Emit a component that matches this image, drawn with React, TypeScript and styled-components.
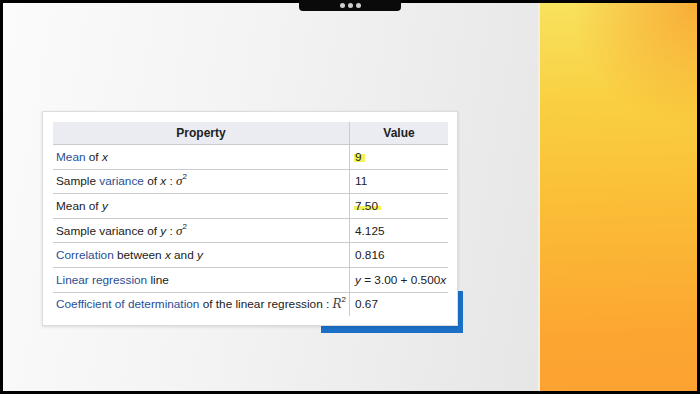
import React from 'react';
import styled, {createGlobalStyle} from 'styled-components';

const GlobalStyle = createGlobalStyle`
  html, body {
    margin: 0;
    padding: 0;
    background: #000;
  }
  body {
    font-family: "Liberation Sans", Arial, sans-serif;
  }
`;

const Frame = styled.div`
  position: relative;
  width: 700px;
  height: 394px;
  box-sizing: border-box;
  padding: 3px;
  background: #000;
`;

const Screen = styled.div`
  display: flex;
  height: 100%;
`;

const Stage = styled.div`
  flex: 1;
  isolation: isolate;
  padding: 108px 0 0 39px;
  background: linear-gradient(100deg, #fbfbfb 0%, #f3f3f3 45%, #e6e6e6 100%);
  border-right: 2px solid #f3efe4;
`;

const SidePanel = styled.div`
  width: 157px;
  background:
    radial-gradient(circle at 100% 0%, rgba(248, 150, 40, 0.7) 0%, rgba(248, 150, 40, 0) 30%),
    linear-gradient(178deg, #f8e25e 0%, #f9d042 25%, #fbbb36 55%, #fca631 85%, #fca231 100%);
`;

const Notch = styled.div`
  position: absolute;
  top: 0;
  left: 299px;
  width: 102px;
  height: 11px;
  background: #0a0a0a;
  border-radius: 0 0 4px 4px;
  display: flex;
  justify-content: center;
  align-items: center;
  gap: 3px;
  padding-bottom: 1px;
  box-sizing: border-box;
`;

const Dot = styled.span`
  width: 5px;
  height: 5px;
  border-radius: 50%;
  background: #cfcfcf;
`;

const Card = styled.div`
  position: relative;
  width: 416px;
  box-sizing: border-box;
  padding: 10px 10px 9px 10px;
  background: #fff;
  border: 1px solid #dcdcdc;
  box-shadow: 0 1px 3px rgba(0, 0, 0, 0.12);

  &::before {
    content: '';
    position: absolute;
    right: -6px;
    bottom: -8px;
    width: 142px;
    height: 42px;
    background: #1b6fc6;
    z-index: -1;
  }
`;

const Table = styled.table`
  width: 395px;
  table-layout: fixed;
  border-collapse: collapse;
  font-size: 11.8px;
  color: #202122;
`;

const HeadCell = styled.th<{$w?: number}>`
  height: 22px;
  padding: 0;
  background: #eaecf2;
  font-weight: bold;
  font-size: 12px;
  text-align: center;
  border-bottom: 1px solid #c8ccd1;
  border-left: ${p => (p.$w ? '1px solid #c8ccd1' : 'none')};
  width: ${p => (p.$w ? `${p.$w}px` : 'auto')};
`;

const Cell = styled.td<{$value?: boolean}>`
  height: 23.6px;
  padding: 0 0 0 ${p => (p.$value ? '5px' : '3px')};
  border-bottom: 1px solid #c8ccd1;
  border-left: ${p => (p.$value ? '1px solid #c8ccd1' : 'none')};
  white-space: nowrap;
`;

const LastRow = styled.tr`
  & > td {
    border-bottom: none;
  }
`;

const Link = styled.span`
  color: #284f94;
`;

const Var = styled.i`
  font-style: italic;
`;

const Sigma = styled.i`
  font-family: "Liberation Serif", "Times New Roman", serif;
  font-style: italic;
  font-size: 13px;
`;

const MathR = styled.i`
  font-family: "DejaVu Serif", "Liberation Serif", serif;
  font-style: italic;
  font-size: 12px;
  color: #444;
`;

const Sup = styled.sup`
  font-size: 8px;
  vertical-align: 6px;
  line-height: 0;
`;

const Marked = styled.span<{$low?: boolean}>`
  padding: 0 3px 0 1px;
  margin-left: -1px;
  background: linear-gradient(
    to bottom,
    transparent ${p => (p.$low ? '48%' : '30%')},
    #f3f45a ${p => (p.$low ? '48%' : '30%')},
    #f3f45a ${p => (p.$low ? '80%' : '85%')},
    transparent ${p => (p.$low ? '80%' : '85%')}
  );
`;

export default function App() {
  return (
    <>
      <GlobalStyle />
      <Frame>
        <Screen>
          <Stage>
            <Card>
              <Table>
                <thead>
                  <tr>
                    <HeadCell>Property</HeadCell>
                    <HeadCell $w={98}>Value</HeadCell>
                  </tr>
                </thead>
                <tbody>
                  <tr>
                    <Cell><Link>Mean</Link> of <Var>x</Var></Cell>
                    <Cell $value><Marked>9</Marked></Cell>
                  </tr>
                  <tr>
                    <Cell>Sample <Link>variance</Link> of <Var>x</Var> : <Sigma>σ</Sigma><Sup>2</Sup></Cell>
                    <Cell $value>11</Cell>
                  </tr>
                  <tr>
                    <Cell>Mean of <Var>y</Var></Cell>
                    <Cell $value><Marked $low>7.50</Marked></Cell>
                  </tr>
                  <tr>
                    <Cell>Sample variance of <Var>y</Var> : <Sigma>σ</Sigma><Sup>2</Sup></Cell>
                    <Cell $value>4.125</Cell>
                  </tr>
                  <tr>
                    <Cell><Link>Correlation</Link> between <Var>x</Var> and <Var>y</Var></Cell>
                    <Cell $value>0.816</Cell>
                  </tr>
                  <tr>
                    <Cell><Link>Linear regression</Link> line</Cell>
                    <Cell $value><Var>y</Var> = 3.00 + 0.500<Var>x</Var></Cell>
                  </tr>
                  <LastRow>
                    <Cell><Link>Coefficient of determination</Link> of the linear regression : <MathR>R</MathR><Sup>2</Sup></Cell>
                    <Cell $value>0.67</Cell>
                  </LastRow>
                </tbody>
              </Table>
            </Card>
          </Stage>
          <SidePanel />
        </Screen>
        <Notch>
          <Dot />
          <Dot />
          <Dot />
        </Notch>
      </Frame>
    </>
  );
}
